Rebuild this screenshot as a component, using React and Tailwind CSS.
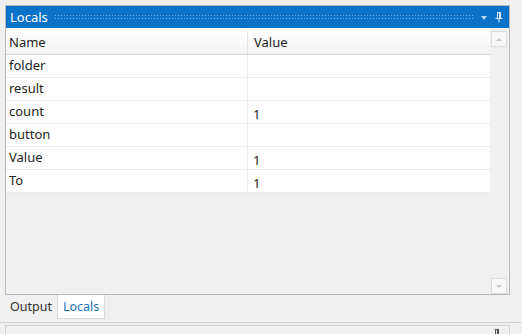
import React from "react";

const rows = [
  { name: "folder", value: "" },
  { name: "result", value: "" },
  { name: "count", value: "1" },
  { name: "button", value: "" },
  { name: "Value", value: "1" },
  { name: "To", value: "1" },
];

const PinIcon = ({ color = "white" }) => (
  <svg width="8" height="11" viewBox="0 0 8 11">
    <path d="M2 0.5h4M2.5 0.5v6M5.5 0.5v6M4.5 1v5.5M0.5 6.5h7M4 6.5v4" stroke={color} strokeWidth="1" fill="none" />
  </svg>
);

const App = () => {
  return (
    <div
      className="w-[522px] h-[334px] bg-[#f0f0f0] relative overflow-hidden text-[13px] text-[#1e1e1e]"
      style={{ fontFamily: '"Noto Sans", "Noto Sans CJK JP", sans-serif' }}
    >
      <div className="absolute left-[5px] top-[5px] w-[505px] h-[290px] border border-[#b8b8b8] flex flex-col bg-[#f0f0f0]">
        {/* title bar */}
        <div className="h-[22px] bg-[#0a72c8] flex items-center pl-[4px] pr-[6px]">
          <span className="text-white text-[13px] leading-none">Locals</span>
          <div
            className="flex-1 h-[6px] mx-[6px]"
            style={{
              backgroundImage:
                "radial-gradient(circle, rgba(255,255,255,0.45) 0.6px, transparent 0.8px)",
              backgroundSize: "3px 3px",
            }}
          />
          <span className="w-0 h-0 border-l-[3.5px] border-r-[3.5px] border-t-[4px] border-l-transparent border-r-transparent border-t-[#bcd6ee] mr-[8px] mt-[2px]" />
          <PinIcon color="#dbe9f6" />
        </div>
        {/* content */}
        <div className="flex-1 flex">
          <div className="flex-1 flex flex-col">
            <div className="h-[3px] bg-white" />
            <div className="flex h-[24px] bg-gradient-to-b from-white to-[#f3f3f3] border-b border-[#d5d5d5]">
              <div className="w-[242px] pl-[3px] pt-[2px] border-r border-[#e4e4e4]">Name</div>
              <div className="flex-1 pl-[6px] pt-[2px]">Value</div>
            </div>
            {rows.map((r) => (
              <div key={r.name} className="flex h-[23px] bg-white border-b border-[#ececec]">
                <div className="w-[242px] pl-[3px] pt-[1px] border-r border-[#ececec] leading-[19px]">{r.name}</div>
                <div className="flex-1 pl-[5px] pt-[4px] leading-[19px]">{r.value}</div>
              </div>
            ))}
          </div>
          {/* scrollbar */}
          <div className="w-[19px] flex flex-col justify-between pt-[3px] pl-[1px] bg-[#f0f0f0]">
            <div className="h-[16px] w-[16px] border border-[#dcdcdc] bg-[#f7f7f7] flex items-center justify-center">
              <span className="w-0 h-0 border-l-[3.5px] border-r-[3.5px] border-b-[3px] border-l-transparent border-r-transparent border-b-[#c8c8c8]" />
            </div>
            <div className="h-[16px] w-[16px] border border-[#dcdcdc] bg-[#f7f7f7] flex items-center justify-center">
              <span className="w-0 h-0 border-l-[3.5px] border-r-[3.5px] border-t-[3px] border-l-transparent border-r-transparent border-t-[#c8c8c8]" />
            </div>
          </div>
        </div>
      </div>
      {/* tabs */}
      <div className="absolute left-[5px] top-[295px] flex h-[24px] text-[12.5px]">
        <div className="pl-[5px] pr-[5px] pt-[3px] text-[#333]">Output</div>
        <div className="px-[5px] pt-[3px] bg-white border border-t-0 border-[#d9d9d9] text-[#1c6fb5]">Locals</div>
      </div>
      {/* lower panel */}
      <div className="absolute left-0 top-[322px] w-[522px] border-t border-[#d2d2d2]" />
      <div className="absolute left-[5px] top-[325px] w-[505px] h-[20px] border border-[#d2d2d2] bg-[#f0f0f0] flex justify-end pr-[8px] pt-[3px]">
        <PinIcon color="#555" />
      </div>
    </div>
  );
};

export default App;
